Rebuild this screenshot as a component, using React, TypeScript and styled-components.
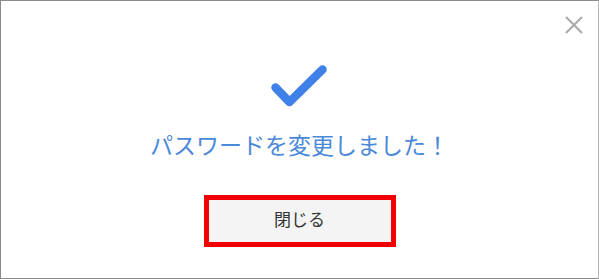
import React from "react";
import styled, { createGlobalStyle } from "styled-components";

const Global = createGlobalStyle`
  html, body { margin: 0; padding: 0; background: #ffffff; }
  body { font-family: "Noto Sans CJK JP", "Noto Sans", sans-serif; }
`;

const Dialog = styled.div`
  position: relative;
  box-sizing: border-box;
  width: 599px;
  height: 279px;
  border: 1px solid #8a8a8a;
  border-right-color: #b5b5b5;
  border-bottom-color: #8a8a8a;
  background: #ffffff;
  display: flex;
  flex-direction: column;
  align-items: center;
  padding-top: 61px;
`;

const CloseButton = styled.button`
  position: absolute;
  top: 13px;
  right: 13px;
  width: 22px;
  height: 22px;
  padding: 0;
  border: none;
  background: transparent;
  display: flex;
  align-items: center;
  justify-content: center;
  cursor: pointer;
`;

const CheckIcon = styled.svg`
  display: block;
  width: 60px;
  height: 46px;
`;

const Message = styled.p`
  margin: 21px 0 0;
  font-size: 23px;
  line-height: 30px;
  color: #4a88da;
  font-weight: 400;
  letter-spacing: 0;
  white-space: nowrap;
`;

const CloseAction = styled.button`
  margin-top: 36px;
  box-sizing: border-box;
  width: 192px;
  height: 52px;
  border: 5px solid #f00000;
  background: #f4f4f4;
  color: #333333;
  font-family: "Noto Sans CJK JP", "Noto Sans", sans-serif;
  font-size: 17px;
  line-height: 20px;
  padding: 0 0 4px;
  display: flex;
  align-items: center;
  justify-content: center;
  cursor: pointer;
`;

export default function App() {
  return (
    <>
      <Global />
      <Dialog>
        <CloseButton aria-label="閉じる">
          <svg width="18" height="18" viewBox="0 0 18 18">
            <path d="M1 1 L17 17 M17 1 L1 17" stroke="#ababab" strokeWidth="2.2" fill="none" />
          </svg>
        </CloseButton>
        <CheckIcon viewBox="0 0 60 46">
          <path
            d="M5.5 25.5 L19.5 40 L52.5 7.5"
            stroke="#3f81e8"
            strokeWidth="8.5"
            strokeLinecap="round"
            strokeLinejoin="round"
            fill="none"
          />
        </CheckIcon>
        <Message>パスワードを変更しました！</Message>
        <CloseAction>閉じる</CloseAction>
      </Dialog>
    </>
  );
}
